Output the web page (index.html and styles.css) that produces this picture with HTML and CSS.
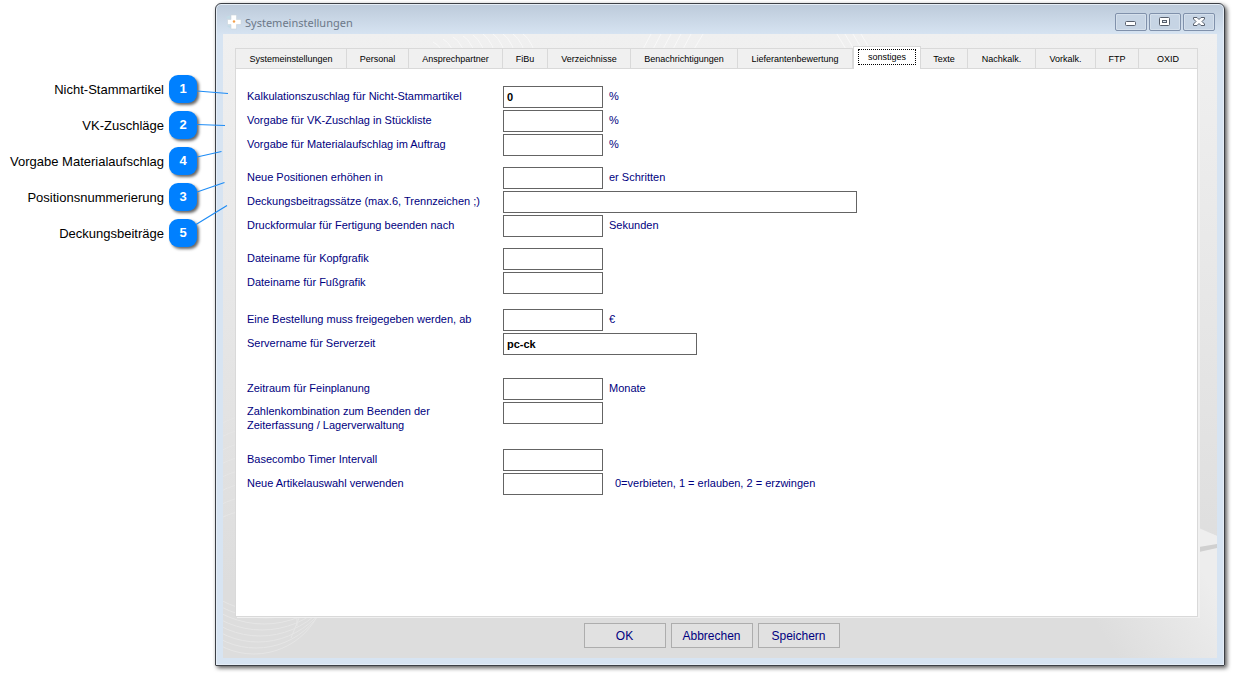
FILE: index.html
```
<!DOCTYPE html>
<html lang="de">
<head>
<meta charset="utf-8">
<title>Systemeinstellungen</title>
<link rel="stylesheet" href="styles.css">
</head>
<body>
<aside class="legend">
  <ol class="legend-list">
    <li>Nicht-Stammartikel <span class="badge">1</span></li>
    <li>VK-Zuschläge <span class="badge">2</span></li>
    <li>Vorgabe Materialaufschlag <span class="badge">4</span></li>
    <li>Positionsnummerierung <span class="badge">3</span></li>
    <li>Deckungsbeiträge <span class="badge">5</span></li>
  </ol>
  <svg class="pointers" width="240" height="260" viewBox="0 0 240 260" aria-hidden="true">
    <path d="M197 91L228 93.500M197 124.500L225 125.500M197 157L221.500 151.500M197 192L224.500 182.500M196 224.500L227 205.500" fill="none" stroke="#1e8cf5" stroke-width="1.200"/>
  </svg>
</aside>

<main class="window">
  <header class="titlebar">
    <svg class="app-icon" width="16" height="16" viewBox="0 0 16 16" aria-hidden="true">
      <path d="M5 1h5.500v4.500H15v5h-4.500V15H5v-4.500H1.500v-5H5z" fill="#fff" stroke="#c9d3da" stroke-width=".6"/>
      <path d="M0 3l4-1.500v3H1zM1 11.500h3.500V14L2 13z" fill="#c3dbe6"/>
      <circle cx="8" cy="7.500" r="1.200" fill="#f4a04c"/>
    </svg>
    <h1 class="title">Systemeinstellungen</h1>
    <div class="window-buttons">
      <button type="button" aria-label="Minimieren"><svg width="30" height="16" viewBox="0 0 30 16"><rect x="9.500" y="7.500" width="10" height="4" rx="1" fill="#fff" stroke="#575f6c"/></svg></button>
      <button type="button" aria-label="Maximieren"><svg width="30" height="16" viewBox="0 0 30 16"><rect x="9.500" y="3.500" width="10" height="8" rx="1" fill="#fff" stroke="#575f6c"/><rect x="12.500" y="6.500" width="4" height="2" fill="#dce6f0" stroke="#575f6c"/></svg></button>
      <button type="button" aria-label="Schließen"><svg width="30" height="16" viewBox="0 0 30 16"><path d="M9.500 3.500h3.500l2 2 2-2h3.500v1.500l-2.500 2.500 2.500 2.500v1.500h-3.500l-2-2-2 2h-3.500v-1.500l2.500-2.500-2.500-2.500z" fill="#fff" stroke="#575f6c"/></svg></button>
    </div>
  </header>

  <div class="client">
    <svg class="decor decor-top" width="520" height="34" viewBox="0 0 520 34" aria-hidden="true">
      <g fill="none" stroke="#f8f8f8"><path d="M0 8Q10 12 16 34M10 5Q20 10 26 34M20 3Q30 8 36 34M30 2Q40 7 46 34M40 1Q50 7 56 34M50 0Q60 6 66 34M60 0Q70 6 76 34M70 0Q80 6 86 34M80 0Q90 6 96 34M90 0Q100 6 106 34"/><path d="M200 34L218 0M210 34L228 0M220 34L238 0M230 34L248 0M240 34L258 0M250 34L270 0M404 0L424 34M412 0L432 34M420 0L440 34M428 0L448 34"/></g>
    </svg>
    <svg class="decor decor-bottom" width="96" height="330" viewBox="0 0 96 330" aria-hidden="true">
      <g fill="none" stroke="#e6e6e6"><circle cx="31" cy="254" r="72"/><circle cx="33" cy="244" r="76"/><circle cx="35" cy="234" r="80"/><circle cx="37" cy="224" r="84"/><circle cx="39" cy="214" r="88"/><circle cx="41" cy="204" r="92"/><circle cx="43" cy="194" r="96"/><circle cx="45" cy="184" r="100"/><path d="M74 280v18M80 280L68 310"/></g>
    </svg>
    <svg class="decor decor-side" width="120" height="134" viewBox="0 0 120 134" aria-hidden="true">
      <defs>
        <linearGradient id="glow" gradientUnits="userSpaceOnUse" x1="20" y1="134" x2="120" y2="70">
          <stop offset="0" stop-color="#ededed" stop-opacity="0"/>
          <stop offset="1" stop-color="#ededed"/>
        </linearGradient>
      </defs>
      <path d="M0 30L102 4L120 12V134H0z" fill="url(#glow)"/>
      <path d="M102 5L120 12V20L102 23z" fill="#eee"/>
      <path d="M102 23L120 20v4L102 28z" fill="#d0d0d0"/>
    </svg>

    <div class="tabs" role="tablist">
      <button type="button" role="tab" class="tab">Systemeinstellungen</button>
      <button type="button" role="tab" class="tab">Personal</button>
      <button type="button" role="tab" class="tab">Ansprechpartner</button>
      <button type="button" role="tab" class="tab">FiBu</button>
      <button type="button" role="tab" class="tab">Verzeichnisse</button>
      <button type="button" role="tab" class="tab">Benachrichtigungen</button>
      <button type="button" role="tab" class="tab">Lieferantenbewertung</button>
      <button type="button" role="tab" class="tab active" aria-selected="true"><span class="focus">sonstiges</span></button>
      <button type="button" role="tab" class="tab">Texte</button>
      <button type="button" role="tab" class="tab">Nachkalk.</button>
      <button type="button" role="tab" class="tab">Vorkalk.</button>
      <button type="button" role="tab" class="tab">FTP</button>
      <button type="button" role="tab" class="tab">OXID</button>
    </div>

    <form class="panel" id="settings">
      <div class="group">
        <div class="row"><label for="f1">Kalkulationszuschlag für Nicht-Stammartikel</label><input id="f1" type="text" value="0"><span>%</span></div>
        <div class="row"><label for="f2">Vorgabe für VK-Zuschlag in Stückliste</label><input id="f2" type="text"><span>%</span></div>
        <div class="row"><label for="f3">Vorgabe für Materialaufschlag im Auftrag</label><input id="f3" type="text"><span>%</span></div>
      </div>
      <div class="group">
        <div class="row"><label for="f4">Neue Positionen erhöhen in</label><input id="f4" type="text"><span>er Schritten</span></div>
        <div class="row"><label for="f5">Deckungsbeitragssätze (max.6, Trennzeichen ;)</label><input id="f5" class="wide" type="text"></div>
        <div class="row"><label for="f6">Druckformular für Fertigung beenden nach</label><input id="f6" type="text"><span>Sekunden</span></div>
      </div>
      <div class="group files">
        <div class="row"><label for="f7">Dateiname für Kopfgrafik</label><input id="f7" type="text"></div>
        <div class="row"><label for="f8">Dateiname für Fußgrafik</label><input id="f8" type="text"></div>
      </div>
      <div class="group order">
        <div class="row"><label for="f9">Eine Bestellung muss freigegeben werden, ab</label><input id="f9" type="text"><span>€</span></div>
        <div class="row"><label for="f10">Servername für Serverzeit</label><input id="f10" class="medium" type="text" value="pc-ck"></div>
      </div>
      <div class="group planning">
        <div class="row"><label for="f11">Zeitraum für Feinplanung</label><input id="f11" type="text"><span>Monate</span></div>
        <div class="row two-line"><label for="f12">Zahlenkombination zum Beenden der<br>Zeiterfassung / Lagerverwaltung</label><input id="f12" type="text"></div>
      </div>
      <div class="group">
        <div class="row"><label for="f13">Basecombo Timer Intervall</label><input id="f13" type="text"></div>
        <div class="row"><label for="f14">Neue Artikelauswahl verwenden</label><input id="f14" type="text"><span class="hint">0=verbieten, 1 = erlauben, 2 = erzwingen</span></div>
      </div>
    </form>

    <footer class="actions">
      <button type="submit" form="settings">OK</button>
      <button type="button">Abbrechen</button>
      <button type="button">Speichern</button>
    </footer>
  </div>
</main>
</body>
</html>
```
FILE: styles.css
```
* { box-sizing: border-box; }

body {
  margin: 0;
  min-height: 100vh;
  padding: 3px 8px 8px 0;
  display: flex;
  background: #fff;
  font-family: "Liberation Sans", Arial, sans-serif;
  font-size: 11px;
  color: #000080;
}

button, input { font-family: inherit; margin: 0; }

.legend { flex: 0 0 215px; padding: 72px 18px 0 0; }

.legend-list {
  list-style: none;
  margin: 0;
  padding: 0;
  display: flex;
  flex-direction: column;
  gap: 8px;
}

.legend-list li {
  display: flex;
  align-items: center;
  justify-content: flex-end;
  gap: 5px;
  font-size: 13px;
  color: #000;
  white-space: nowrap;
}

.badge {
  width: 28px;
  height: 28px;
  border-radius: 9px;
  background: #0080ff;
  box-shadow: 2px 2px 3px rgba(0, 0, 0, .6);
  color: #fff;
  font-weight: bold;
  line-height: 28px;
  text-align: center;
}

.pointers { position: absolute; left: 0; top: 0; z-index: 2; pointer-events: none; }

.window {
  flex: 1;
  min-width: 0;
  display: flex;
  flex-direction: column;
  padding: 0 7px 7px;
  border: 1px solid #3c4046;
  border-radius: 6px 6px 1px 1px;
  background: linear-gradient(#bccada, #d7e4f2 31px);
  box-shadow: inset 0 0 0 1px #e6eef7, 2px 2px 4px rgba(0, 0, 0, .65);
}

.titlebar {
  display: flex;
  align-items: center;
  gap: 3px;
  height: 30px;
  padding: 6px 2px 0 3px;
}

.title {
  flex: 1;
  margin: 0;
  font: 11px "Noto Sans", "Open Sans", sans-serif;
  color: #6c7888;
}

.window-buttons { display: flex; gap: 2px; }

.window-buttons button {
  width: 32px;
  height: 18px;
  padding: 0;
  border: 1px solid #8091ab;
  border-radius: 2px;
  background: #c6d4e4;
  box-shadow: inset 0 0 0 1px #d5e0ec;
  display: flex;
  align-items: center;
  justify-content: center;
}

.client {
  position: relative;
  flex: 1;
  display: flex;
  flex-direction: column;
  padding: 12px 19px 10px 12px;
  background: linear-gradient(#f0f0f0, #dddddd 88%);
}

.decor { position: absolute; }
.decor-top { left: 210px; top: 0; }
.decor-bottom { left: 0; bottom: 0; }
.decor-side { right: 0; bottom: 0; }

.tabs {
  position: relative;
  display: grid;
  grid-template-columns: 112fr 62fr 94fr 45fr 83fr 107fr 115fr 68fr 47fr 68fr 60fr 43fr 59fr;
  align-items: end;
  height: 22px;
}

.tab {
  height: 20px;
  padding: 0;
  border: 1px solid #d9d9d9;
  border-width: 1px 1px 0 0;
  background: #f0f0f0;
  color: #000;
  font-size: 9px;
  white-space: nowrap;
}

.tab:first-child { border-left-width: 1px; }

.tab.active {
  height: 23px;
  margin-bottom: -1px;
  padding-bottom: 2px;
  border-left-width: 1px;
  background: #fff;
  z-index: 1;
}

.focus { display: inline-block; padding: 2px 9px; border: 1px dotted #000; }

.panel {
  position: relative;
  flex: 1;
  padding: 17px 11px;
  border: 1px solid #d9d9d9;
  background: #fff;
  box-shadow: 2px 1px 0 #f0f0f0;
}

.group {
  display: flex;
  flex-direction: column;
  gap: 2px;
  margin-bottom: 11px;
}

.files { margin-bottom: 15px; }
.order { margin-bottom: 23px; }
.planning { margin-bottom: 17px; }

.row {
  display: grid;
  grid-template-columns: 250px auto 1fr;
  column-gap: 6px;
  line-height: 20px;
  white-space: nowrap;
}

.row input {
  width: 100px;
  height: 22px;
  padding: 0 3px 1px;
  border: 1px solid #646464;
  background: #fff;
  color: #000;
  font-size: 11px;
  font-weight: bold;
}

.row .medium { width: 194px; }
.row .wide { width: 354px; }
.two-line label { line-height: 14px; padding-top: 2px; }
.hint { padding-left: 6px; }

.actions {
  position: relative;
  display: flex;
  justify-content: center;
  gap: 5px;
  padding: 6px 10px 0 0;
}

.actions button {
  width: 82px;
  height: 25px;
  padding: 0;
  border: 1px solid #adadad;
  background: #e1e1e1;
  color: #000080;
  font-size: 12px;
}
```
